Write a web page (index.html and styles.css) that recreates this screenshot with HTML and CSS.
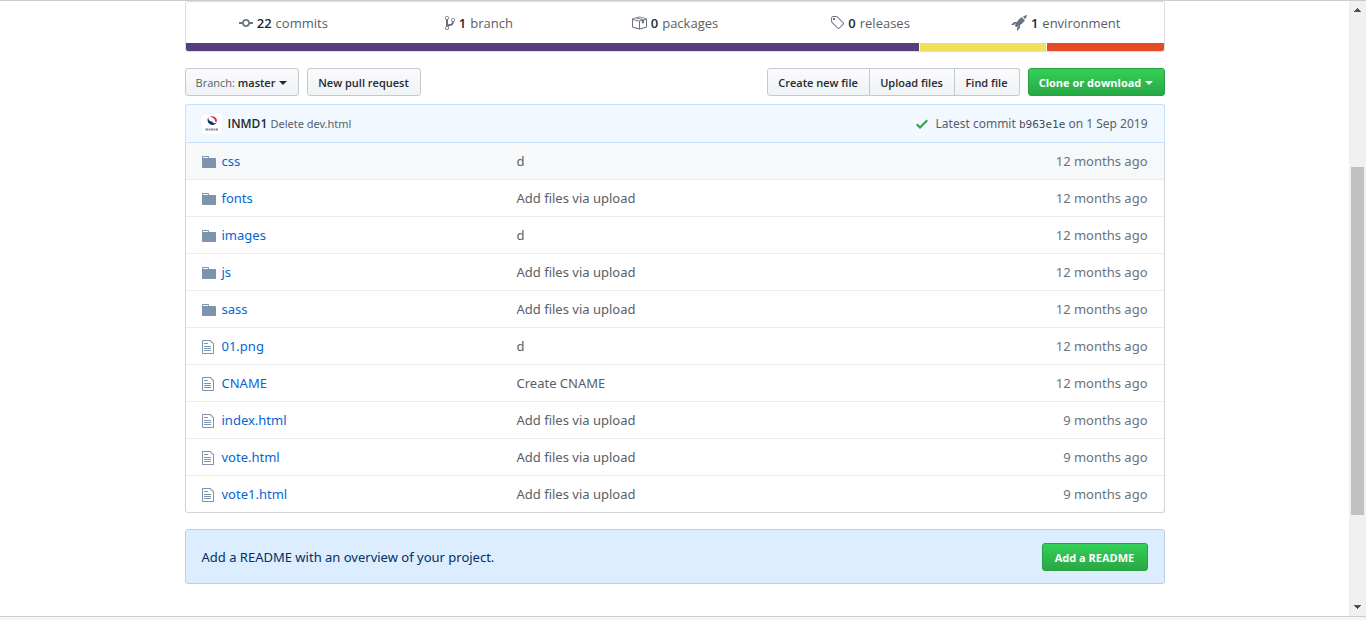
FILE: index.html
```
<!DOCTYPE html>
<html lang="en">
<head>
<meta charset="utf-8">
<title>Repository files</title>
<link rel="stylesheet" href="styles.css">
</head>
<body>
<svg class="sprite" aria-hidden="true">
  <symbol id="commit" viewBox="0 0 14 16"><path d="M10.86 7c-.45-1.72-2-3-3.86-3-1.86 0-3.41 1.28-3.86 3H0v2h3.14c.45 1.72 2 3 3.86 3 1.86 0 3.41-1.28 3.86-3H14V7h-3.14zM7 10.2c-1.22 0-2.2-.98-2.2-2.2 0-1.22.98-2.2 2.2-2.2 1.22 0 2.2.98 2.2 2.2 0 1.22-.98 2.2-2.2 2.2z"/></symbol>
  <symbol id="branch" viewBox="0 0 10 16"><path d="M10 5c0-1.11-.89-2-2-2a1.993 1.993 0 00-1 3.72v.3c-.02.52-.23.98-.63 1.38-.4.4-.86.61-1.38.63-.83.02-1.48.16-2 .45V4.72a1.993 1.993 0 00-1-3.72C.88 1 0 1.89 0 3a2 2 0 001 1.72v6.56c-.59.35-1 .99-1 1.72 0 1.11.89 2 2 2 1.11 0 2-.89 2-2 0-.53-.2-1-.53-1.36.09-.06.48-.41.59-.47.25-.11.56-.17.94-.17 1.05-.05 1.95-.45 2.75-1.25S8.95 7.77 9 6.73h-.02C9.59 6.37 10 5.73 10 5zM2 1.8c.66 0 1.2.55 1.2 1.2 0 .65-.55 1.2-1.2 1.2C1.35 4.2.8 3.65.8 3c0-.65.55-1.2 1.2-1.2zm0 12.41c-.66 0-1.2-.55-1.2-1.2 0-.65.55-1.2 1.2-1.2.65 0 1.2.55 1.2 1.2 0 .65-.55 1.2-1.2 1.2zm6-8c-.66 0-1.2-.55-1.2-1.2 0-.65.55-1.2 1.2-1.2.65 0 1.2.55 1.2 1.2 0 .65-.55 1.2-1.2 1.2z"/></symbol>
  <symbol id="package" viewBox="0 0 16 16"><path d="M1 4.27v7.47c0 .45.3.84.75.97l6.5 1.73c.16.05.34.05.5 0l6.5-1.73c.45-.13.75-.52.75-.97V4.27c0-.45-.3-.84-.75-.97l-6.5-1.74a1.4 1.4 0 00-.5 0L1.75 3.3c-.45.13-.75.52-.75.97zm7 9.09l-6-1.59V5l6 1.61v6.75zM2 4l2.5-.67L11 5.06l-2.5.67L2 4zm13 7.77l-6 1.59V6.61l2-.55V8.5l2-.53V5.53L15 5v6.77zm-2-7.24L6.5 2.8l2-.53L15 4l-2 .53z"/></symbol>
  <symbol id="tag" viewBox="0 0 14 16"><path d="M7.73 1.73C7.26 1.26 6.62 1 5.96 1H3.5C2.13 1 1 2.13 1 3.5v2.47c0 .66.27 1.3.73 1.77l6.06 6.06c.39.39 1.02.39 1.41 0l4.59-4.59a.996.996 0 000-1.41L7.73 1.73zM2.38 7.09c-.31-.3-.47-.7-.47-1.13V3.5c0-.88.72-1.59 1.59-1.59h2.47c.42 0 .83.16 1.13.47l6.14 6.13-4.73 4.73-6.13-6.15zM3.01 3h2v2H3V3h.01z"/></symbol>
  <symbol id="rocket" viewBox="0 0 16 16"><path d="M12.17 3.83c-.27-.27-.47-.55-.63-.88-.16-.31-.27-.66-.34-1.02-.58.33-1.16.7-1.73 1.13-.58.44-1.14.94-1.69 1.48-.7.7-1.33 1.81-1.78 2.45H3L0 10h3l2-2c-.34.77-1.02 2.98-1 3l1 1c.02.02 2.23-.64 3-1l-2 2v3l3-3v-3c.64-.45 1.75-1.09 2.45-1.78.55-.55 1.05-1.13 1.47-1.7.44-.58.81-1.16 1.14-1.72-.36-.08-.7-.19-1.03-.34a3.39 3.39 0 01-.86-.63zM16 0s-.09.38-.3 1.06c-.2.7-.55 1.58-1.06 2.66-.7-.08-1.27-.33-1.66-.72-.39-.39-.63-.94-.7-1.64C13.36.84 14.23.48 14.92.28 15.62.08 16 0 16 0z"/></symbol>
  <symbol id="folder" viewBox="0 0 14 16"><path d="M13 4H7V3c0-.66-.31-1-1-1H1c-.55 0-1 .45-1 1v10c0 .55.45 1 1 1h12c.55 0 1-.45 1-1V5c0-.55-.45-1-1-1zM6 4H1V3h5v1z"/></symbol>
  <symbol id="file" viewBox="0 0 12 16"><path d="M6 5H2V4h4v1zM2 8h7V7H2v1zm0 2h7V9H2v1zm0 2h7v-1H2v1zm10-7.5V14c0 .55-.45 1-1 1H1c-.55 0-1-.45-1-1V2c0-.55.45-1 1-1h7.5L12 4.5zM11 5L8 2H1v12h10V5z"/></symbol>
  <symbol id="check" viewBox="0 0 12 16"><path d="M12 5l-8 8-4-4 1.5-1.5L4 10l6.5-6.5L12 5z"/></symbol>
</svg>
<div class="window">
  <main class="page">
    <div class="container">
      <section class="summary">
        <ul class="stats">
          <li><a href="#"><svg width="14" height="16"><use href="#commit"/></svg><strong>22</strong> commits</a></li>
          <li><a href="#"><svg width="10" height="16"><use href="#branch"/></svg><strong>1</strong> branch</a></li>
          <li><a href="#"><svg width="16" height="16"><use href="#package"/></svg><strong>0</strong> packages</a></li>
          <li><a href="#"><svg width="14" height="16"><use href="#tag"/></svg><strong>0</strong> releases</a></li>
          <li><a href="#"><svg width="16" height="16"><use href="#rocket"/></svg><strong>1</strong> environment</a></li>
        </ul>
        <div class="languages">
          <span class="lang css" style="flex-grow: 75.2"></span>
          <span class="lang js" style="flex-grow: 12.9"></span>
          <span class="lang html" style="flex-grow: 11.9"></span>
        </div>
      </section>

      <div class="toolbar">
        <button class="btn caret branch-btn" type="button"><span><i>Branch:</i> master</span></button>
        <button class="btn pull-btn" type="button">New pull request</button>
        <div class="group">
          <button class="btn create-btn" type="button">Create new file</button>
          <button class="btn upload-btn" type="button">Upload files</button>
          <button class="btn find-btn" type="button">Find file</button>
        </div>
        <button class="btn primary caret clone-btn" type="button"><span>Clone or download</span></button>
      </div>

      <section class="files">
        <header class="latest">
          <svg class="avatar" width="20" height="20" viewBox="0 0 20 20">
            <rect width="20" height="20" rx="3" fill="#fff"/>
            <path d="M6.500 3A5 5 0 1 0 15 8.200C13.600 9.600 11.600 9.400 10.600 8.200 9.600 7 8.400 7.600 7.400 6.600 6.400 5.600 6.200 4.400 6.500 3z" fill="#12365f"/>
            <path d="M7.600 2.700C10.800 1 15.400 3.400 15 7.400L13.200 8C13.600 5 10.800 3.200 7.600 2.700z" fill="#d2304a"/>
            <path d="M3.500 15.500h13" stroke="#888" stroke-width="2" stroke-dasharray="2.500 .5 1.500 .5"/>
          </svg>
          <p><a class="author" href="#">INMD1</a> <a class="subject" href="#">Delete dev.html</a></p>
          <p class="stamp"><svg class="check" width="12" height="16"><use href="#check"/></svg><span>Latest commit <a class="sha" href="#">b963e1e</a> on 1 Sep 2019</span></p>
        </header>
        <table>
          <tbody>
            <tr class="hover"><td class="icon"><svg width="14" height="16"><use href="#folder"/></svg></td><td class="name"><a href="#">css</a></td><td class="message"><a href="#">d</a></td><td class="age">12 months ago</td></tr>
            <tr><td class="icon"><svg width="14" height="16"><use href="#folder"/></svg></td><td class="name"><a href="#">fonts</a></td><td class="message"><a href="#">Add files via upload</a></td><td class="age">12 months ago</td></tr>
            <tr><td class="icon"><svg width="14" height="16"><use href="#folder"/></svg></td><td class="name"><a href="#">images</a></td><td class="message"><a href="#">d</a></td><td class="age">12 months ago</td></tr>
            <tr><td class="icon"><svg width="14" height="16"><use href="#folder"/></svg></td><td class="name"><a href="#">js</a></td><td class="message"><a href="#">Add files via upload</a></td><td class="age">12 months ago</td></tr>
            <tr><td class="icon"><svg width="14" height="16"><use href="#folder"/></svg></td><td class="name"><a href="#">sass</a></td><td class="message"><a href="#">Add files via upload</a></td><td class="age">12 months ago</td></tr>
            <tr><td class="icon"><svg width="12" height="16"><use href="#file"/></svg></td><td class="name"><a href="#">01.png</a></td><td class="message"><a href="#">d</a></td><td class="age">12 months ago</td></tr>
            <tr><td class="icon"><svg width="12" height="16"><use href="#file"/></svg></td><td class="name"><a href="#">CNAME</a></td><td class="message"><a href="#">Create CNAME</a></td><td class="age">12 months ago</td></tr>
            <tr><td class="icon"><svg width="12" height="16"><use href="#file"/></svg></td><td class="name"><a href="#">index.html</a></td><td class="message"><a href="#">Add files via upload</a></td><td class="age">9 months ago</td></tr>
            <tr><td class="icon"><svg width="12" height="16"><use href="#file"/></svg></td><td class="name"><a href="#">vote.html</a></td><td class="message"><a href="#">Add files via upload</a></td><td class="age">9 months ago</td></tr>
            <tr><td class="icon"><svg width="12" height="16"><use href="#file"/></svg></td><td class="name"><a href="#">vote1.html</a></td><td class="message"><a href="#">Add files via upload</a></td><td class="age">9 months ago</td></tr>
          </tbody>
        </table>
      </section>

      <section class="readme">
        <p>Add a README with an overview of your project.</p>
        <button class="btn primary readme-btn" type="button">Add a README</button>
      </section>
    </div>
  </main>
  <div class="scrollbar" aria-hidden="true">
    <svg width="9" height="5" viewBox="0 0 9 5"><path d="M4 0h1v1h1v1h1v1h1v1H1V3h1V2h1V1h1z"/></svg>
    <div class="track"><div class="thumb"></div></div>
    <svg width="9" height="5" viewBox="0 0 9 5"><path d="M1 1h7v1H7v1H6v1H5v1H4V4H3V3H2V2H1z"/></svg>
  </div>
</div>
</body>
</html>
```
FILE: styles.css
```
* { box-sizing: border-box; }
html { background: #f5f5f5; }
body {
  margin: 0;
  min-height: 100vh;
  padding-bottom: 3px;
  display: flex;
  font: 13px/20px "Noto Sans", "Open Sans", sans-serif;
  color: #24292e;
}
p, ul { margin: 0; padding: 0; }
a { color: inherit; text-decoration: none; }
svg { fill: currentColor; flex: none; }
.sprite { position: absolute; width: 0; height: 0; }

.window {
  flex: 1;
  display: flex;
  border-top: 1px solid #ccc;
  border-bottom: 1px solid #ccc;
  background: #fff;
}
.page { flex: 1; padding: 0 16px 32px; }
.container { max-width: 980px; margin: 0 auto; }

.summary {
  margin-bottom: 16px;
  border: 1px solid #ddd;
  border-radius: 3px;
  overflow: hidden;
}
.stats { display: flex; list-style: none; font-family: "Open Sans", "Noto Sans", sans-serif; }
.stats li { flex: 1; padding: 11px 0 10px; color: #586069; }
.stats a { display: flex; justify-content: center; align-items: center; gap: 4px; }
.stats svg { color: #6a737d; }
.stats strong { font-weight: 600; color: #24292e; }
.languages { display: flex; gap: 1px; height: 8px; }
.lang { flex-basis: 0; }
.css { background: #563d7c; }
.js { background: #f1e05a; }
.html { background: #e34c26; }

.toolbar { display: flex; gap: 8px; margin-bottom: 8px; }
.group { display: flex; margin-left: auto; }
.btn {
  height: 28px;
  padding: 1px 0 0;
  border: 1px solid #c5c9cd;
  border-radius: 3px;
  background: linear-gradient(#fafbfc, #eff3f6);
  color: #24292e;
  font: 600 11px/20px "Open Sans", "Noto Sans", sans-serif;
  white-space: nowrap;
}
.btn i { font-style: normal; font-weight: 400; color: #586069; }
.caret { display: flex; align-items: center; justify-content: center; gap: 4px; }
.caret::after {
  content: "";
  border: 4px solid transparent;
  border-top-color: currentColor;
  border-bottom: 0;
}
.group .btn { border-radius: 0; }
.group .btn + .btn { border-left: 0; }
.group .btn:first-child { border-radius: 3px 0 0 3px; }
.group .btn:last-child { border-radius: 0 3px 3px 0; }
.primary {
  border-color: #28a03f;
  background: linear-gradient(#34d058, #28a745);
  color: #fff;
  font-weight: 700;
}
.branch-btn, .pull-btn { width: 114px; }
.create-btn { width: 103px; }
.upload-btn { width: 85px; }
.find-btn { width: 65px; }
.clone-btn { width: 137px; }
.readme-btn { width: 106px; }

.files { border: 1px solid #d1d5da; border-radius: 3px; border-top: 0; margin-bottom: 16px; }
.latest {
  display: flex;
  align-items: center;
  gap: 6px;
  margin: 0 -1px;
  padding: 9px 16px 8px;
  border: 1px solid #c8e1ff;
  border-radius: 3px 3px 0 0;
  background: #f1f8ff;
  color: #586069;
  font-size: 12px;
}
.author { font-family: "Open Sans", "Noto Sans", sans-serif; font-weight: 600; color: #24292e; }
.subject { font-size: 11px; }
.stamp { display: flex; align-items: center; gap: 8px; margin-left: auto; }
.check { color: #28a745; }
.sha { font-family: "DejaVu Sans Mono", monospace; font-size: 11px; line-height: 12px; color: #444d56; }

table { width: 100%; border-spacing: 0; table-layout: fixed; }
td { height: 37px; padding: 0; border-top: 1px solid #eaecef; }
tr:first-child td { height: 36px; border-top: 0; }
.hover { background: #f6f8fa; }
td.icon { width: 36px; padding: 2px 0 0 16px; color: #7d94ae; }
.icon svg { display: block; }
.name { width: 295px; color: #0366d6; }
.message { color: #586069; }
.age { width: 140px; padding-right: 16px; text-align: right; color: #6a737d; }

.readme {
  display: flex;
  align-items: center;
  justify-content: space-between;
  padding: 13px 16px 12px;
  border: 1px solid #bacfe5;
  border-radius: 3px;
  background: #dbedff;
  color: #032f62;
}

.scrollbar {
  display: flex;
  flex-direction: column;
  align-items: center;
  width: 17px;
  padding: 7px 2px;
  background: #f0f0f0;
  color: #505050;
}
.track { flex: 1; align-self: stretch; display: flex; flex-direction: column; }
.track::before { content: ""; flex: 154; }
.track::after { content: ""; flex: 89; }
.thumb { flex: 348; background: #c1c1c1; }
```
